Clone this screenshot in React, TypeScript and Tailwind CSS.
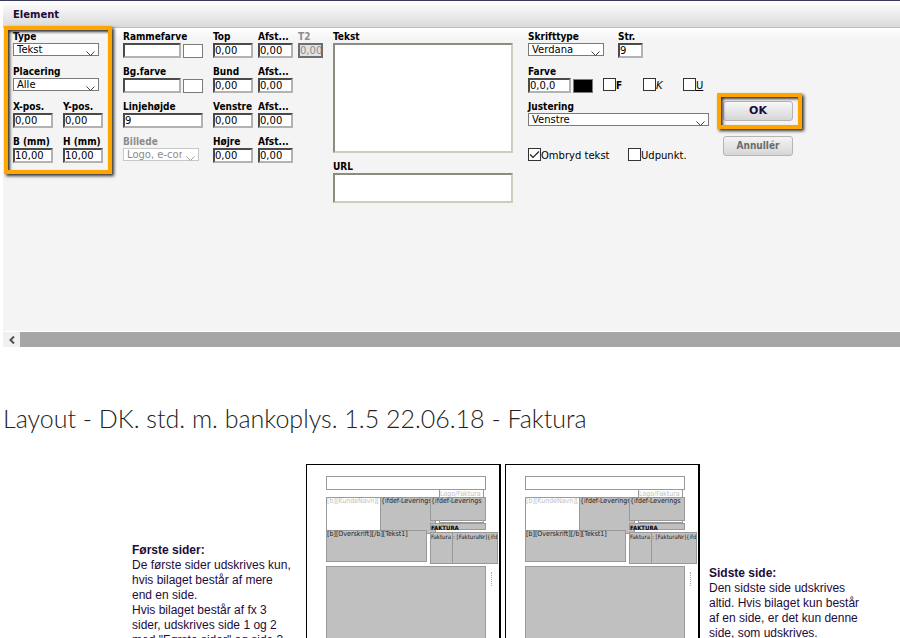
import { ReactNode } from 'react';
import clsx from 'clsx';

interface FieldProps {
  id: string;
  label: string;
  value?: string;
  width: string;
  disabled?: boolean;
}

interface SelectFieldProps extends FieldProps {
  options: string[];
}

function Label({ id, muted, children }: { id: string; muted?: boolean; children: ReactNode }) {
  return (
    <label
      htmlFor={id}
      className={clsx(
        "block h-[13px] font-['DejaVu_Sans_Condensed','DejaVu_Sans',sans-serif] text-[10px] leading-[13px] font-bold whitespace-nowrap",
        muted ? 'text-[#8c8c8c]' : 'text-black'
      )}
    >
      {children}
    </label>
  );
}

function TextField({ id, label, value = '', width, disabled }: FieldProps) {
  return (
    <div className={clsx('h-[35px]', width)}>
      <Label id={id} muted={disabled}>{label}</Label>
      <input
        id={id}
        defaultValue={value}
        disabled={disabled}
        className={clsx(
          'block h-[15px] w-full border-2 text-[10px]',
          disabled
            ? 'border-[#6d6d6d] bg-[#e3e3e3] text-[#8c8c8c]'
            : 'border-t-[#4a4a4a] border-l-[#4a4a4a] border-r-[#b2b2b2] border-b-[#b2b2b2] bg-white text-black'
        )}
      />
    </div>
  );
}

function SelectField({ id, label, options, width, disabled }: SelectFieldProps) {
  return (
    <div className={clsx('h-[35px]', width)}>
      <Label id={id} muted={disabled}>{label}</Label>
      <div className="relative">
        <select
          id={id}
          disabled={disabled}
          className={clsx(
            'block h-[13px] w-full appearance-none border bg-white pr-4 pl-[3px] text-[10px] leading-[11px]',
            disabled ? 'border-[#c8c8c8] text-[#8c8c8c]' : 'border-[#7a7a7a] text-black'
          )}
        >
          {options.map((option) => (
            <option key={option}>{option}</option>
          ))}
        </select>
        <svg
          viewBox="0 0 9 5"
          className={clsx('pointer-events-none absolute right-1 bottom-0 h-[5px] w-[9px]', disabled ? 'text-[#a5a5a5]' : 'text-[#444]')}
        >
          <path d="M0.5 0.5 L4.5 4.5 L8.5 0.5" fill="none" stroke="currentColor" />
        </svg>
      </div>
    </div>
  );
}

function ColorField({ id, label, value, color }: { id: string; label: string; value?: string; color: string }) {
  return (
    <div className="flex items-end gap-[2px]">
      <TextField id={id} label={label} value={value} width="w-[58px]" />
      <button
        type="button"
        aria-label={`${label} vælger`}
        className={clsx('mb-[7px] h-[14px] w-5 border border-[#7a7a7a]', color)}
      />
    </div>
  );
}

function CheckField({ id, checked, children }: { id: string; checked?: boolean; children: ReactNode }) {
  return (
    <div className="flex items-start">
      <span className="relative block h-[13px] w-[13px]">
        <input
          id={id}
          type="checkbox"
          defaultChecked={checked}
          className="peer block h-[13px] w-[13px] appearance-none border border-[#333] bg-white"
        />
        <svg viewBox="0 0 13 13" className="pointer-events-none absolute inset-0 hidden peer-checked:block">
          <path d="M2 6.5 L5 9.5 L11 3.5" fill="none" stroke="#222" strokeWidth="1.2" />
        </svg>
      </span>
      <label htmlFor={id} className="text-[10px] leading-[15px] text-black">{children}</label>
    </div>
  );
}

// Orange frame that draws attention to a part of the form
function Highlight({ className }: { className: string }) {
  return (
    <div
      className={clsx(
        'pointer-events-none absolute border-4 border-[#ffa500] shadow-[2px_2px_3px_#333,inset_2px_2px_3px_#333]',
        className
      )}
    />
  );
}

const layoutBoxes = [
  { text: 'Logo/Faktura', box: 'left-[132px] top-[20px] w-[45px] h-[38px] bg-white text-[#c0c0c0] pt-[5px] text-[7px]' },
  { text: '', box: 'left-[19px] top-[11px] w-[160px] h-[14px] bg-white' },
  { text: '[b][KundeNavn][', box: 'left-[19px] top-[32px] w-[56px] h-[35px] bg-white text-[#c0c0c0] text-[7px]' },
  { text: '{ifdef-Leverings', box: 'left-[73px] top-[32px] w-[56px] h-[37px] bg-[#c0c0c0] text-[7px]' },
  { text: '{ifdef-Leverings', box: 'left-[123px] top-[32px] w-[56px] h-[24px] bg-[#c0c0c0] text-[7px]' },
  { text: 'FAKTURA', box: 'left-[123px] top-[58px] w-[56px] h-[7px] bg-[#c0c0c0] text-[6px] font-bold text-black' },
  { text: '[b][Overskrift][/b][Tekst1]', box: 'left-[19px] top-[65px] w-[101px] h-[32px] bg-[#c0c0c0] text-[7px]' },
  { text: 'Faktura', box: 'left-[123px] top-[67px] w-[23px] h-[32px] bg-[#c0c0c0] text-[6px]' },
  { text: ': [FakturaNr]{ifd', box: 'left-[145px] top-[67px] w-[46px] h-[32px] bg-[#c0c0c0] text-[6px]' },
  { text: '', box: 'left-[19px] top-[101px] w-[160px] h-[140px] bg-[#c0c0c0]' },
];

function LayoutPreview() {
  return (
    <div className="relative h-[276px] w-[195px] shrink-0 border border-r-2 border-black bg-white">
      {layoutBoxes.map((item, i) => (
        <div key={i} className={clsx('absolute border border-[#999] leading-[7px] whitespace-nowrap', item.box)}>
          {item.text}
        </div>
      ))}
      <div className="absolute top-[107px] left-[184px] h-[14px] border-l border-dotted border-[#aaa]" />
    </div>
  );
}

export default function App() {
  return (
    <div className="h-screen overflow-hidden bg-white font-['DejaVu_Sans',Verdana,sans-serif] text-[#1d0b3b]">
      <div className="h-px bg-[#3a3a5c]" />
      <section className="ml-[3px]">
        <header className="h-[27px] border-b border-[#bdbdbd] bg-linear-to-b from-white to-[#dadada] px-[10px]">
          <h2 className="text-[10px] leading-[27px] font-bold">Element</h2>
        </header>

        <form className="flex h-[303px] items-start bg-linear-to-b from-white to-[#f4f4f4] to-[12px] pt-[2px] pl-[10px]">
          {/* Type and position */}
          <div className="relative mr-5 w-[90px]">
            <SelectField id="type" label="Type" options={['Tekst']} width="w-[86px]" />
            <SelectField id="placement" label="Placering" options={['Alle']} width="w-[86px]" />
            <div className="flex gap-[10px]">
              <TextField id="x" label="X-pos." value="0,00" width="w-10" />
              <TextField id="y" label="Y-pos." value="0,00" width="w-10" />
            </div>
            <div className="flex gap-[10px]">
              <TextField id="b" label="B (mm)" value="10,00" width="w-10" />
              <TextField id="h" label="H (mm)" value="10,00" width="w-10" />
            </div>
            <Highlight className="-top-1 -right-[9px] -bottom-1 -left-[9px]" />
          </div>

          {/* Colours and line height */}
          <div className="mr-[10px] w-20">
            <ColorField id="frame" label="Rammefarve" color="bg-white" />
            <ColorField id="background" label="Bg.farve" color="bg-white" />
            <TextField id="line-height" label="Linjehøjde" value="9" width="w-20" />
            <SelectField id="image" label="Billede" options={['Logo, e-conomic']} width="w-[76px]" disabled />
          </div>

          {/* Borders */}
          <div className="mr-[10px] flex gap-[5px]">
            <div>
              {['Top', 'Bund', 'Venstre', 'Højre'].map((side) => (
                <TextField key={side} id={side} label={side} value="0,00" width="w-10" />
              ))}
            </div>
            <div>
              {['Top', 'Bund', 'Venstre', 'Højre'].map((side) => (
                <TextField key={side} id={`${side}-distance`} label="Afst..." value="0,00" width="w-[35px]" />
              ))}
            </div>
            <TextField id="t2" label="T2" value="0,00" width="w-[25px]" disabled />
          </div>

          {/* Text and link */}
          <div className="mr-[15px] w-[180px]">
            <Label id="text">Tekst</Label>
            <textarea
              id="text"
              className="block h-[110px] w-full resize-none border-2 border-t-[#8b8b7e] border-l-[#8b8b7e] border-r-[#cdcdbf] border-b-[#cdcdbf] bg-white text-[10px]"
            />
            <div className="mt-[7px]">
              <Label id="url">URL</Label>
              <input
                id="url"
                className="block h-[30px] w-full border-2 border-t-[#8b8b7e] border-l-[#8b8b7e] border-r-[#cdcdbf] border-b-[#cdcdbf] bg-white text-[10px]"
              />
            </div>
          </div>

          {/* Font settings */}
          <div className="mr-[14px] w-[181px]">
            <div className="flex gap-[14px]">
              <SelectField id="font" label="Skrifttype" options={['Verdana']} width="w-[76px]" />
              <TextField id="size" label="Str." value="9" width="w-[25px]" />
            </div>
            <div className="flex">
              <div className="flex items-end gap-[2px]">
                <TextField id="color" label="Farve" value="0,0,0" width="w-[43px]" />
                <button type="button" aria-label="Farve vælger" className="mb-[7px] h-[14px] w-5 border border-[#7a7a7a] bg-black" />
              </div>
              <div className="flex items-start pt-[13px] pl-[10px]">
                <div className="w-10"><CheckField id="bold"><b className="font-['DejaVu_Sans_Condensed']">F</b></CheckField></div>
                <div className="w-10"><CheckField id="italic"><i>K</i></CheckField></div>
                <CheckField id="underline"><u>U</u></CheckField>
              </div>
            </div>
            <SelectField id="align" label="Justering" options={['Venstre']} width="w-[181px]" />
            <div className="flex pt-[13px]">
              <div className="w-[100px]"><CheckField id="wrap" checked>Ombryd tekst</CheckField></div>
              <CheckField id="bullet">Udpunkt.</CheckField>
            </div>
          </div>

          <div className="flex w-[70px] flex-col gap-[15px] pt-[71px]">
            <div className="relative">
              <button type="submit" className="block h-5 w-full rounded-[3px] border border-[#b5b5b5] bg-linear-to-b from-[#f8f8f8] to-[#d6d6d6] text-[11px] leading-[18px] font-bold">
                OK
              </button>
              <Highlight className="-top-2 -right-[9px] -bottom-2 -left-[6px]" />
            </div>
            <button type="button" className="block h-5 w-full rounded-[3px] border border-[#b5b5b5] bg-linear-to-b from-[#f4f4f4] to-[#d6d6d6] font-['DejaVu_Sans_Condensed','DejaVu_Sans',sans-serif] text-[10px] leading-[18px] font-bold text-[#6b6b6b]">
              Annullér
            </button>
          </div>
        </form>

        {/* Horizontal scrollbar */}
        <div className="mt-px flex h-[15px] bg-[#a6a6a6]">
          <button type="button" aria-label="Rul til venstre" className="flex w-[17px] items-center justify-center bg-[#f0f0f0]">
            <svg viewBox="0 0 6 8" className="h-2 w-[6px]">
              <path d="M5 0.5 L1.5 4 L5 7.5" fill="none" stroke="#505050" strokeWidth="2" />
            </svg>
          </button>
        </div>
      </section>

      <h1 className="mt-[54px] ml-[3px] font-['Lato',sans-serif] text-[25px] leading-[34px] font-light text-[#222]">
        Layout - DK. std. m. bankoplys. 1.5 22.06.18 - Faktura
      </h1>

      <div className="mt-[29px] ml-[132px] flex items-start font-['Liberation_Sans',Arial,sans-serif] text-[12px] leading-[15px]">
        <div className="w-[174px] pt-[79px] pr-3">
          <p className="font-bold">Første sider:</p>
          <p>De første sider udskrives kun, hvis bilaget består af mere end en side.</p>
          <p>Hvis bilaget består af fx 3 sider, udskrives side 1 og 2 med "Første sider" og side 3</p>
        </div>
        <div className="flex gap-1 font-['DejaVu_Sans_Condensed','DejaVu_Sans',sans-serif] text-[#222]">
          <LayoutPreview />
          <LayoutPreview />
        </div>
        <div className="w-[164px] pt-[102px] pl-[9px]">
          <p className="font-bold">Sidste side:</p>
          <p>Den sidste side udskrives altid. Hvis bilaget kun består af en side, er det kun denne side, som udskrives.</p>
        </div>
      </div>
    </div>
  );
}
